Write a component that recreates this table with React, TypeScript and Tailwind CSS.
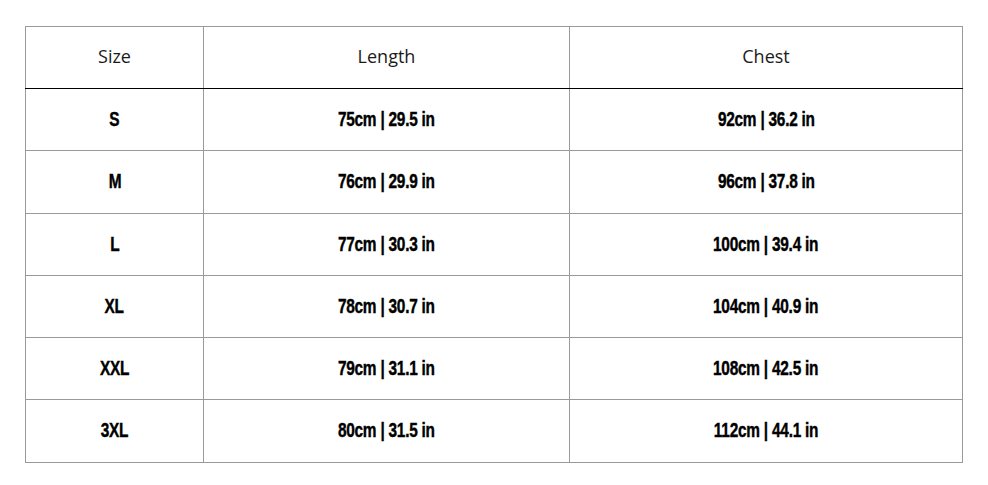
import React from "react";

const rows = [
  ["S", "75cm | 29.5 in", "92cm | 36.2 in"],
  ["M", "76cm | 29.9 in", "96cm | 37.8 in"],
  ["L", "77cm | 30.3 in", "100cm | 39.4 in"],
  ["XL", "78cm | 30.7 in", "104cm | 40.9 in"],
  ["XXL", "79cm | 31.1 in", "108cm | 42.5 in"],
  ["3XL", "80cm | 31.5 in", "112cm | 44.1 in"],
];

const heights = ["h-[62px]", "h-[63px]", "h-[62px]", "h-[62px]", "h-[62px]", "h-[63px]"];

export default function App() {
  return (
    <div className="w-[988px] h-[485px] bg-white pl-[25px] pt-[26px]">
      <table className="border-collapse table-fixed w-[937px]">
        <colgroup>
          <col className="w-[178px]" />
          <col className="w-[366px]" />
          <col className="w-[393px]" />
        </colgroup>
        <thead>
          <tr className="h-[62px]">
            {["Size", "Length", "Chest"].map((h) => (
              <th
                key={h}
                className="border border-[#9a9a9a] border-b-black p-0 pb-[3px] text-center font-normal text-[18px] text-[#1a1a1a] [font-family:'Open_Sans',sans-serif]"
              >
                {h}
              </th>
            ))}
          </tr>
        </thead>
        <tbody>
          {rows.map((r, i) => (
            <tr key={i} className={heights[i]}>
              {r.map((c, j) => (
                <td
                  key={j}
                  className="border border-[#9a9a9a] p-0 text-center text-black"
                >
                  <span className="inline-block scale-x-[0.79] whitespace-nowrap font-bold text-[19.5px] tracking-[-0.3px] [-webkit-text-stroke:0.4px_black] [font-family:'Liberation_Sans',Arial,sans-serif]">
                    {c}
                  </span>
                </td>
              ))}
            </tr>
          ))}
        </tbody>
      </table>
    </div>
  );
}
